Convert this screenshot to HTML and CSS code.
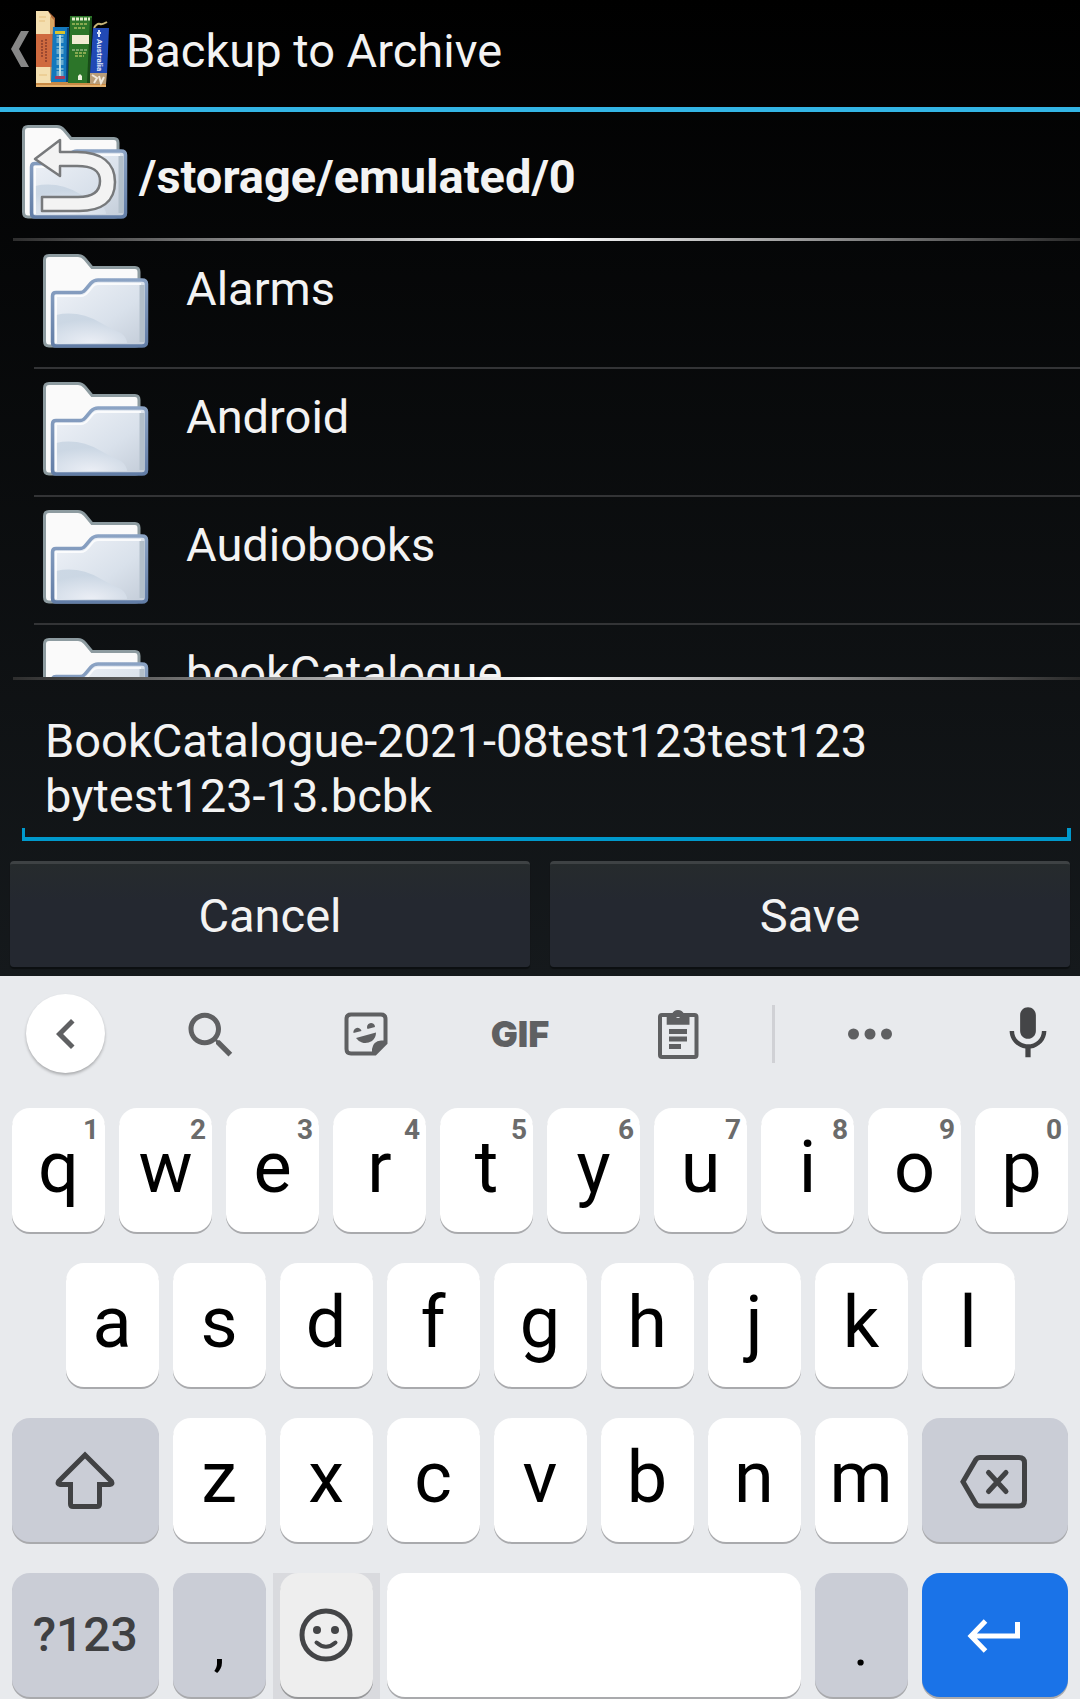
FILE: index.html
```html
<!DOCTYPE html>
<html lang="en">
<head>
<meta charset="utf-8">
<meta name="viewport" content="width=device-width, initial-scale=1">
<title>Backup to Archive</title>
<link rel="stylesheet" href="styles.css">
</head>
<body>
<svg class="defs" aria-hidden="true">
  <defs>
    <linearGradient id="front" x1="0" y1="0" x2="1" y2="1">
      <stop offset="0" stop-color="#f0f3f8"/><stop offset=".6" stop-color="#d9e1eb"/><stop offset="1" stop-color="#c3ccd8"/>
    </linearGradient>
    <radialGradient id="glow" cx=".5" cy="1" r=".8">
      <stop offset="0" stop-color="#f1f3f9"/><stop offset="1" stop-color="#c6d3e1"/>
    </radialGradient>
    <linearGradient id="edge" x1="0" y1="0" x2="0" y2="1">
      <stop offset="0" stop-color="#8ba3c4"/><stop offset="1" stop-color="#627da6"/>
    </linearGradient>
    <symbol id="folder" viewBox="0 0 106 94">
      <path d="M6 1.500H35Q39 1.500 42 5L49 13.500H92Q96 13.500 96 18V90Q96 92 92 92H6Q1.500 92 1.500 87V6Q1.500 1.500 6 1.500Z" fill="#fafafa" stroke="#8d9ba0" stroke-width="3"/>
      <path d="M13 38.500H37Q40 38.500 42 36L48 29Q51 26 55 26H99Q103.500 26 103.500 30V88Q103.500 92 99 92H13Q9.500 92 9.500 88V42Q9.500 38.500 13 38.500Z" fill="url(#front)" stroke="url(#edge)" stroke-width="3.500"/>
      <path d="M13 61Q36 56 58 69Q68 75 78 79Q84 84 84 89H13Z" fill="url(#glow)" opacity=".8"/>
      <path d="M99 31V88" stroke="#b2bfca" stroke-width="5"/>
      <path d="M13 89V42H38Q42 42 45 38L50 32Q52 30 55 30H98" fill="none" stroke="#fff" stroke-width="2" opacity=".8"/>
    </symbol>
  </defs>
</svg>
<div class="screen">
  <main class="app">
    <header class="bar">
      <button class="home" type="button" aria-label="Navigate up">
        <svg class="caret" viewBox="0 0 18 36"><path d="M10 0h8L8 18l10 18h-8L0 18z" fill="#878787"/></svg>
        <svg class="books" viewBox="36 11 73 76">
          <path d="M36 81h70v6H36z" fill="#c98a45"/>
          <path d="M36 85h70v2H36z" fill="#e3b06c"/>
          <path d="M48 11l7 7v64h-7z" fill="#b06a3c"/>
          <path d="M36 11h12l3 5v67H36z" fill="#f4dfb0"/>
          <path d="M36 34h16v33H36z" fill="#cf6a3f"/>
          <path d="M50 16l4 4v14h-4zM50 67h3v14h-3z" fill="#d9a765"/>
          <path d="M42 40v17M46 39v23" stroke="#7b3328" stroke-width="1.500" stroke-dasharray="2 1" opacity=".8"/>
          <path d="M39 17h7M39 21h6M39 75h8" stroke="#e6bf7c"/>
          <path d="M53 27h16l-1 55H51z" fill="#1478bd"/>
          <path d="M67 28h2l-1 54h-2z" fill="#0a4278"/>
          <path d="M55 31h10v3H55z" fill="#d9c32d"/>
          <path d="M60 35v41" stroke="#7fb9d4" stroke-width="7" stroke-dasharray="2 1 5 3" opacity=".8"/>
          <path d="M60 35v41" stroke="#b8dfe8" stroke-width="2"/>
          <path d="M55 76h10v3H55z" fill="#a53a5c"/>
          <path d="M70 16h22l-2 67H68z" fill="#2c7529"/>
          <path d="M90 18h2l-2 65h-3z" fill="#184c18"/>
          <path d="M72 19h18" stroke="#e3edcb" stroke-width="3" stroke-dasharray="3 1"/>
          <path d="M72 24h15M74 28h12M75 53h11M75 56h9" stroke="#9eb65a" stroke-width="2" stroke-dasharray="3 1" opacity=".8"/>
          <path d="M72 50h15" stroke="#c6d7ad" stroke-dasharray="3 1"/>
          <path d="M72 35h17v9H72z" fill="#f2ecd3"/>
          <path d="M78 76l2-2 2 2v4h-4z" fill="#eef2df"/>
          <path d="M94 28q3-5 6-4 2 1 7-2" fill="none" stroke="#c6b477" stroke-width="2"/>
          <path d="M93 28h16l-2 46H90z" fill="#2149b5"/>
          <path d="M90 73h17l-1 11H90z" fill="#b99d78"/>
          <path d="M92 75l5 3-3 5M99 76l2 7 3-6" fill="none" stroke="#f0e8da" stroke-width="2"/>
          <path d="M99 30v7M97 33h4" stroke="#d8e1f8" stroke-width="2"/>
          <text x="0" y="0" transform="translate(97 39) rotate(90)" class="spine">Australia</text>
        </svg>
      </button>
      <h1 class="title">Backup to Archive</h1>
    </header>

    <button class="path" type="button">
      <svg class="folder" viewBox="0 0 106 94">
        <use href="#folder"/>
        <path d="M13 34L38 15V27H55C80 27 93 38 93 57C93 77 79 86 57 86H20V72H56C70 72 78 67 78 56C78 45 70 41 55 41H38V51Z" fill="#f3f3f3" stroke="#77797b" stroke-width="2.500" stroke-linejoin="round"/>
      </svg>
      <span>/storage/emulated/0</span>
    </button>

    <div class="rule"></div>
    <ul class="list">
      <li class="row"><svg class="folder"><use href="#folder"/></svg><span>Alarms</span></li>
      <li class="row"><svg class="folder"><use href="#folder"/></svg><span>Android</span></li>
      <li class="row"><svg class="folder"><use href="#folder"/></svg><span>Audiobooks</span></li>
      <li class="row"><svg class="folder"><use href="#folder"/></svg><span>bookCatalogue</span></li>
    </ul>
    <div class="rule"></div>

    <form class="save">
      <textarea class="name" rows="2" aria-label="File name" spellcheck="false">BookCatalogue-2021-08test123test123 bytest123-13.bcbk</textarea>
      <div class="actions">
        <button class="action" type="button">Cancel</button>
        <button class="action" type="button">Save</button>
      </div>
    </form>
  </main>

  <section class="keyboard" aria-label="Keyboard">
    <div class="tools">
      <button class="tool round" type="button" aria-label="Back"><svg class="glyph" viewBox="0 0 24 24"><path d="M15.410 7.410L14 6l-6 6 6 6 1.410-1.410L10.830 12z"/></svg></button>
      <button class="tool" type="button" aria-label="Search"><svg class="glyph" viewBox="0 0 24 24"><path d="M15.500 14.500h-.79l-.28-.27C15.410 13.090 16 11.610 16 10 16 6.410 13.090 3.500 9.500 3.500S3 6.410 3 10 5.910 16.500 9.500 16.500c1.610 0 3.090-.59 4.230-1.570l.27.28v.79l5 4.990L20.490 19.500l-4.990-5zm-6 0C7.010 14.500 5 12.490 5 10S7.010 5.500 9.500 5.500 14 7.510 14 10 11.990 14.500 9.500 14.500z"/></svg></button>
      <button class="tool" type="button" aria-label="Stickers"><svg class="glyph" viewBox="0 0 60 60">
        <path d="M15 10.500H45Q49.500 10.500 49.500 15V39L39 49.500H15Q10.500 49.500 10.500 45V15Q10.500 10.500 15 10.500Z" fill="none" stroke="#5f6062" stroke-width="4"/>
        <path d="M36 51V45Q37 37 45 36.500H51V39L39 51Z"/>
        <path d="M17.500 29A4 4 0 1 1 25.500 27ZM31.500 25A4 4 0 1 1 39 23ZM20 34L40 28.500Q40 34 36 37 31 40 26 38.500 22 37 20 34Z"/></svg></button>
      <button class="tool gif" type="button">GIF</button>
      <button class="tool" type="button" aria-label="Clipboard"><svg class="glyph" viewBox="648 1004 60 60">
        <rect x="660" y="1015" width="36.500" height="42" rx="2" fill="none" stroke="#5f6062" stroke-width="4"/>
        <path fill-rule="evenodd" d="M666.700 1014H672a6.500 6.500 0 0 1 12 0h5.500v10.700h-22.800zM678 1013a2.500 2.500 0 1 0 .1 0z"/>
        <path d="M669 1029h18v5h-18zM669 1036.500h18v5h-18zM669 1044h12v5h-12z"/></svg></button>
      <span class="divider"></span>
      <button class="tool" type="button" aria-label="More"><svg class="glyph" viewBox="0 0 60 60"><circle cx="13.500" cy="30" r="5.500"/><circle cx="30" cy="30" r="5.500"/><circle cx="46.500" cy="30" r="5.500"/></svg></button>
      <button class="tool mic" type="button" aria-label="Voice input"><svg class="glyph" viewBox="4 0 16 24"><path d="M12 14c1.660 0 3-1.340 3-3V5c0-1.660-1.340-3-3-3S9 3.340 9 5v6c0 1.660 1.340 3 3 3zm5.300-3c0 3-2.540 5.100-5.300 5.100S6.700 14 6.700 11H5c0 3.410 2.720 6.230 6 6.720V21h2v-3.280c3.280-.48 6-3.300 6-6.720z"/></svg></button>
    </div>

    <div class="keys">
      <button class="key" type="button">q<sup class="hint">1</sup></button>
      <button class="key" type="button">w<sup class="hint">2</sup></button>
      <button class="key" type="button">e<sup class="hint">3</sup></button>
      <button class="key" type="button">r<sup class="hint">4</sup></button>
      <button class="key" type="button">t<sup class="hint">5</sup></button>
      <button class="key" type="button">y<sup class="hint">6</sup></button>
      <button class="key" type="button">u<sup class="hint">7</sup></button>
      <button class="key" type="button">i<sup class="hint">8</sup></button>
      <button class="key" type="button">o<sup class="hint">9</sup></button>
      <button class="key" type="button">p<sup class="hint">0</sup></button>

      <button class="key indent" type="button">a</button>
      <button class="key" type="button">s</button>
      <button class="key" type="button">d</button>
      <button class="key" type="button">f</button>
      <button class="key" type="button">g</button>
      <button class="key" type="button">h</button>
      <button class="key" type="button">j</button>
      <button class="key" type="button">k</button>
      <button class="key" type="button">l</button>

      <button class="key wide grey" type="button" aria-label="Shift"><svg class="mark" viewBox="0 0 72 60"><path d="M36 5L62.500 31.500Q64 34.500 61 34.500H50.500V54Q50.500 56.500 48 56.500H24Q21.500 56.500 21.500 54V34.500H11Q8 34.500 9.500 31.500Z"/></svg></button>
      <button class="key" type="button">z</button>
      <button class="key" type="button">x</button>
      <button class="key" type="button">c</button>
      <button class="key" type="button">v</button>
      <button class="key" type="button">b</button>
      <button class="key" type="button">n</button>
      <button class="key" type="button">m</button>
      <button class="key wide grey" type="button" aria-label="Backspace"><svg class="mark" viewBox="0 0 72 60"><path d="M21 7.500H60Q65.500 7.500 65.500 13V50.500Q65.500 56 60 56H21Q18.500 56 17 54L4 31.800 17 9.500Q18.500 7.500 21 7.500Z"/><path stroke-linecap="round" d="M29.500 22.500L47 41.500M47 22.500L29.500 41.500"/></svg></button>

      <button class="key wide grey symbols" type="button">?123</button>
      <button class="key grey punct" type="button">,</button>
      <button class="key pressed" type="button" aria-label="Emoji"><svg class="mark" viewBox="0 0 72 60"><circle cx="36" cy="30" r="24"/><circle class="dot" cx="27" cy="25" r="4"/><circle class="dot" cx="45" cy="25" r="4"/><path stroke-linecap="round" stroke-width="4" d="M26.500 37.500Q36 46 45.500 37.500"/></svg></button>
      <button class="key space" type="button" aria-label="Space"></button>
      <button class="key grey punct" type="button">.</button>
      <button class="key wide enter" type="button" aria-label="Enter"><svg class="mark" viewBox="0 0 72 60"><path d="M58.500 17V31H13M26.500 16L12 31 26.500 46"/></svg></button>
    </div>
  </section>
</div>
</body>
</html>
```
FILE: styles.css
```css
* {
  box-sizing: border-box;
}

body {
  margin: 0;
  font-family: Roboto, "Liberation Sans", sans-serif;
  font-size: 47px;
  line-height: 56px;
  color: #f3f3f3;
  background: #000;
}

button,
textarea {
  margin: 0;
  padding: 0;
  border: 0;
  font: inherit;
  color: inherit;
  background: none;
}

.defs {
  position: absolute;
  width: 0;
  height: 0;
}

.screen {
  display: flex;
  flex-direction: column;
  height: 100vh;
}

/* File chooser */

.app {
  flex: 1 1 0;
  min-height: 0;
  display: flex;
  flex-direction: column;
  background: linear-gradient(#000, #15191c);
}

.bar {
  display: flex;
  align-items: center;
  gap: 17px;
  padding: 11px 11px 20px;
  border-bottom: 5px solid #33b5e5;
}

.home {
  display: flex;
  align-items: center;
  gap: 7px;
}

.caret {
  width: 18px;
  height: 36px;
}

.books {
  width: 73px;
  height: 76px;
}

.spine {
  font: bold 8px Roboto, sans-serif;
  fill: #e6ecfb;
}

.title {
  margin: 0;
  padding-top: 4px;
  font-size: 47px;
  font-weight: 400;
}

.folder {
  flex: none;
  width: 106px;
  height: 94px;
}

.path {
  display: flex;
  align-items: center;
  gap: 11px;
  padding: 13px 22px 19px;
  font-weight: 700;
  text-align: left;
}

.path span {
  padding-top: 10px;
}

.rule {
  flex: none;
  height: 3px;
  margin-left: 13px;
  background: linear-gradient(90deg, #2e2e2e, #fff 50%, #2a2a2a);
}

.list {
  flex: 1 1 0;
  min-height: 0;
  overflow: hidden;
  margin: 0 0 0 34px;
  padding: 0;
  list-style: none;
}

.row {
  display: flex;
  align-items: flex-start;
  gap: 37px;
  padding: 13px 9px 19px;
  border-bottom: 2px solid #333436;
}

.row span {
  padding-top: 7px;
}

.save {
  padding: 10px 10px 9px;
}

.name {
  display: block;
  width: calc(100% - 11px);
  height: 151px;
  margin-left: 12px;
  padding: 23px 24px 0 23px;
  line-height: 55px;
  resize: none;
  overflow: hidden;
  outline: 0;
  background:
    linear-gradient(#09c, #09c) bottom / 100% 4px no-repeat,
    linear-gradient(#09c, #09c) left bottom / 3px 13px no-repeat,
    linear-gradient(#09c, #09c) right bottom / 4px 13px no-repeat;
}

.actions {
  display: flex;
  gap: 20px;
  margin-top: 20px;
}

.action {
  flex: 1;
  height: 106px;
  border-top: 3px solid #3e4244;
  border-radius: 4px;
  background: linear-gradient(#262b2d, #242830 35%, #242830);
  box-shadow: 0 2px 1px #0c0f11;
}

/* Keyboard */

.keyboard {
  flex: none;
  color: #000;
  background: #e8eaed;
}

.tools {
  display: grid;
  grid-template-columns: 131fr 160fr 149fr 160fr 156fr 34fr 160fr 130fr;
  align-items: center;
  justify-items: center;
  height: 132px;
  padding-bottom: 17px;
}

.tool {
  display: flex;
  align-items: center;
  justify-content: center;
}

.glyph {
  width: 60px;
  height: 60px;
  fill: #5f6062;
}

.round {
  width: 79px;
  height: 79px;
  border-radius: 50%;
  background: #fff;
  box-shadow: 0 2px 3px #0004;
}

.gif {
  font-family: Inter, sans-serif;
  font-size: 36px;
  font-weight: 900;
  color: #5f6062;
}

.divider {
  width: 3px;
  height: 58px;
  background: #d0d1d5;
}

.mic {
  justify-self: end;
  padding-right: 31px;
}

.mic .glyph {
  width: 42px;
  height: 63px;
  fill: #444547;
}

.keys {
  display: grid;
  grid-template-columns: repeat(20, 1fr);
  grid-auto-rows: 124px;
  gap: 31px 14px;
  padding: 0 12px 2px;
}

.key {
  position: relative;
  display: flex;
  align-items: center;
  justify-content: center;
  grid-column: span 2;
  padding-bottom: 5px;
  border-radius: 18px;
  font-size: 72px;
  line-height: 84px;
  background: #fff;
  box-shadow: 0 2px 0 #a9aaad;
}

.hint {
  position: absolute;
  top: 6px;
  right: 6px;
  font-size: 28px;
  font-weight: 700;
  line-height: 32px;
  color: #6b6b6b;
}

.indent {
  grid-column: 2 / span 2;
}

.wide {
  grid-column: span 3;
}

.space {
  grid-column: span 8;
}

.grey {
  background: #cacdd6;
}

.symbols {
  padding: 0;
  font-size: 48px;
  font-weight: 500;
  color: #3f4042;
}

.punct {
  padding: 22px 0 0;
  font-size: 56px;
  line-height: 64px;
}

.pressed {
  isolation: isolate;
}

.pressed::before {
  content: "";
  position: absolute;
  z-index: -2;
  inset: 0 -7px -3px;
  background: #d9dade;
}

.pressed::after {
  content: "";
  position: absolute;
  z-index: -1;
  inset: 0;
  border-radius: 18px;
  background: #eee;
  box-shadow: 0 2px 0 #97989a;
}

.enter {
  background: #1a73e8;
}

.mark {
  width: 72px;
  height: 60px;
  margin-top: 4px;
  fill: none;
  stroke: #414244;
  stroke-width: 5;
}

.enter .mark {
  stroke: #fff;
}

.pressed .mark {
  stroke: #444547;
}

.dot {
  fill: #444547;
  stroke: none;
}
```
